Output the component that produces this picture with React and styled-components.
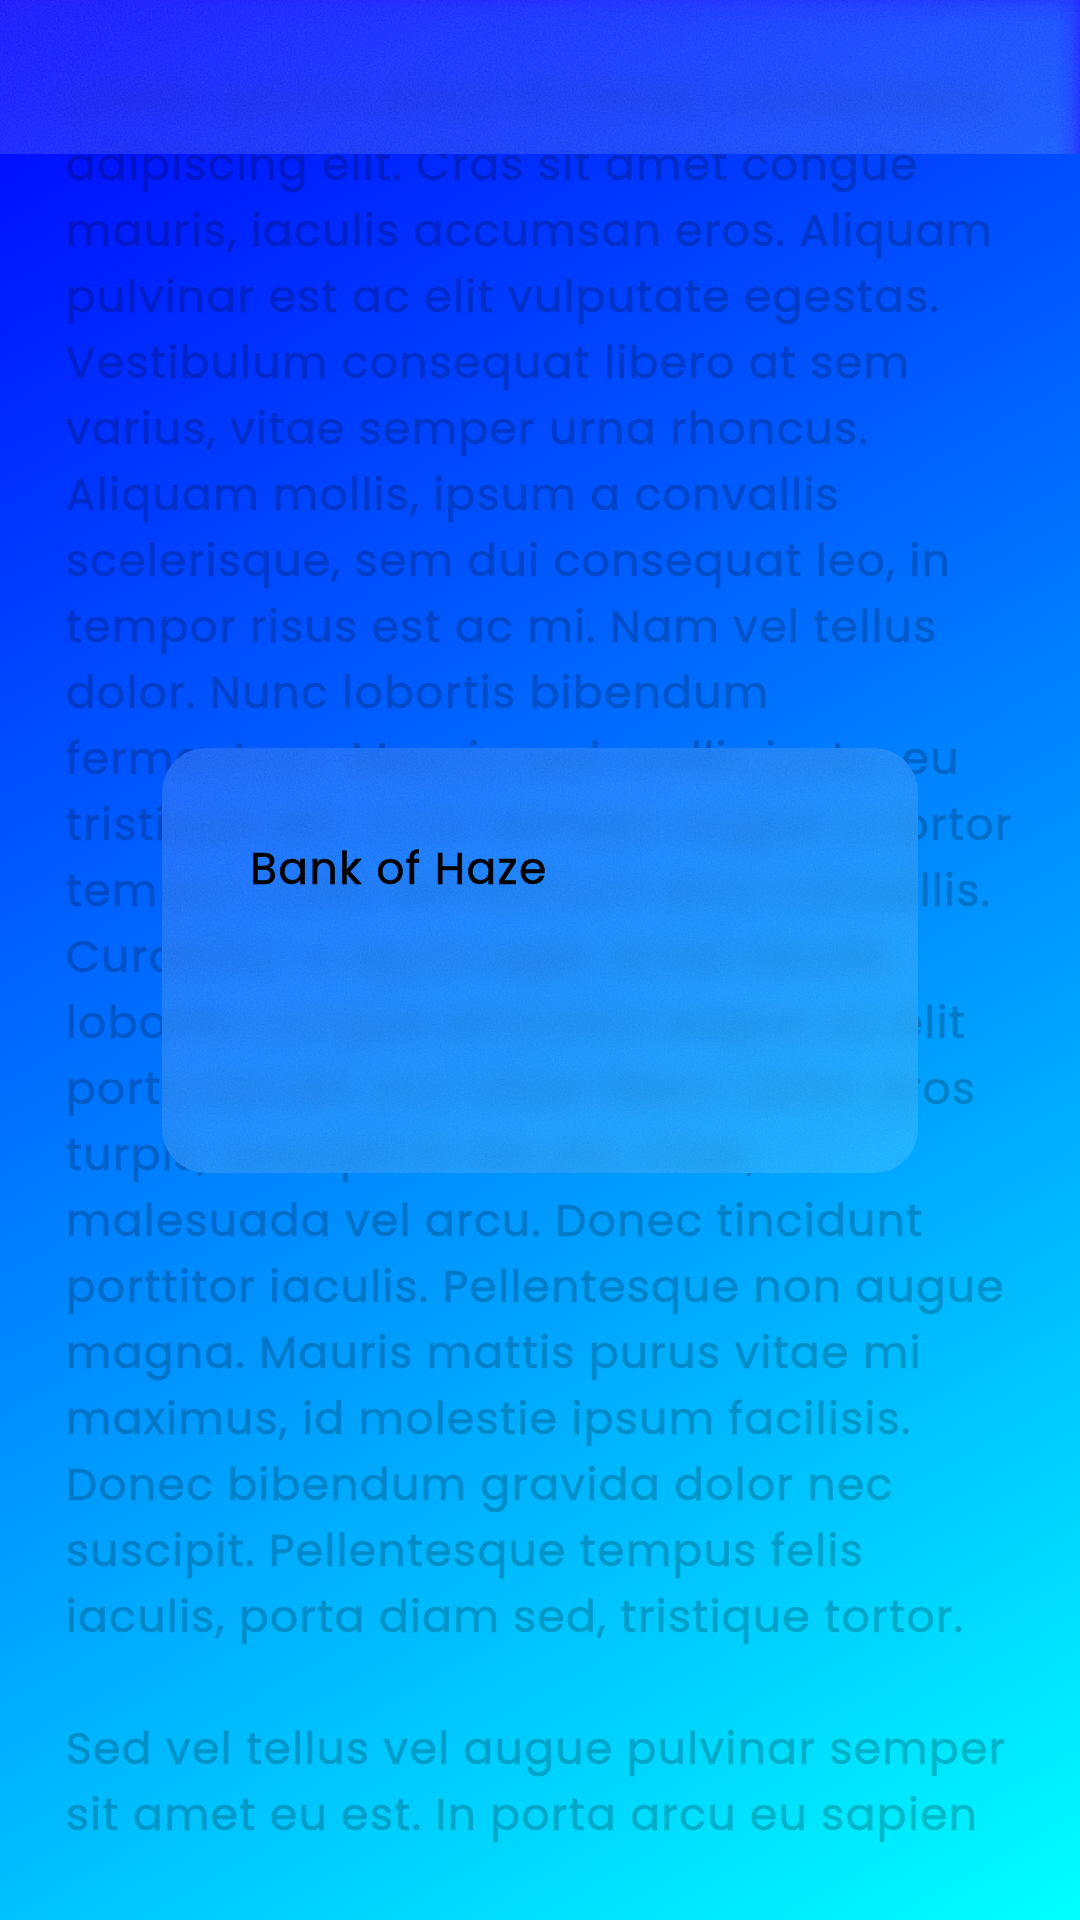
import React from "react";
import styled, { createGlobalStyle } from "styled-components";

const GlobalStyle = createGlobalStyle`
  * { box-sizing: border-box; }
  body { margin: 0; }
`;

const Screen = styled.main`
  display: grid;
  grid-template: 1920px / 1080px;
  width: 1080px;
  height: 1920px;
  overflow: hidden;
  background: linear-gradient(150.642deg, #0000ff, #00ffff);
  color: #000;
  font: 400 44px/66px Poppins, Inter, sans-serif;
  letter-spacing: 1.375px;
  -webkit-text-stroke: 0.6px #000;
`;

const Article = styled.article`
  grid-area: 1 / 1;
  padding: 66px;
  opacity: 0.21;
`;

const Paragraph = styled.p`
  margin: 0 0 66px;
  white-space: pre;
`;

const Overlay = styled.div`
  grid-area: 1 / 1;
  display: grid;
  place-items: center;
  z-index: 1;
`;

const Glass = styled.section`
  display: grid;
  grid-template: 100% / 100%;
`;

/* The box reaches past the panel so the blur also samples what lies just outside it;
   the mask keeps only the content box, whose corners are the outer radius less the padding. */
const Frost = styled.div`
  grid-area: 1 / 1;
  margin: ${(p) => p.$margin};
  padding: ${(p) => p.$padding};
  border-radius: ${(p) => p.$radius};
  background: rgba(255, 255, 255, 0.1);
  backdrop-filter: blur(14px);
  mask: linear-gradient(#000 0 0) content-box;
`;

const TopBar = styled(Glass)`
  grid-area: 1 / 1;
  place-self: start stretch;
  height: 154px;
`;

const EdgeShade = styled.div`
  grid-area: 1 / 1;
  z-index: 1;
  background:
    linear-gradient(270deg, rgba(32, 24, 255, 0.65), rgba(32, 32, 255, 0.3) 9px, rgba(32, 44, 255, 0) 24px),
    linear-gradient(180deg, rgba(32, 24, 255, 0.4), rgba(32, 32, 255, 0.2) 8px, rgba(32, 44, 255, 0) 24px);
`;

const Card = styled(Glass)`
  grid-area: 1 / 1;
  width: 756px;
  height: 425px;
`;

const Title = styled.h1`
  grid-area: 1 / 1;
  z-index: 2;
  margin: 0;
  padding: 88px;
  font: inherit;
`;

const NoiseLayer = styled.svg`
  grid-area: 1 / 1;
  z-index: 1;
  width: 100%;
  height: 100%;
  min-height: 0;
  border-radius: ${(p) => p.$radius};
  overflow: hidden;
`;

function Noise({ id, radius = "0" }) {
  return (
    <NoiseLayer $radius={radius} aria-hidden="true">
      <filter id={id} x="0" y="0" width="100%" height="100%" colorInterpolationFilters="sRGB">
        <feTurbulence type="fractalNoise" baseFrequency="0.55" numOctaves="2" seed="4" />
        <feColorMatrix values="0 0 0 0 1  0 0 0 0 1  0 0 0 0 1  0.12 0 0 0 -0.025" />
      </filter>
      <rect width="100%" height="100%" filter={`url(#${id})`} />
    </NoiseLayer>
  );
}

const paragraphs = [
  [
    "Lorem ipsum dolor sit amet, consectetur",
    "adipiscing elit. Cras sit amet congue",
    "mauris, iaculis accumsan eros. Aliquam",
    "pulvinar est ac elit vulputate egestas.",
    "Vestibulum consequat libero at sem",
    "varius, vitae semper urna rhoncus.",
    "Aliquam mollis, ipsum a convallis",
    "scelerisque, sem dui consequat leo, in",
    "tempor risus est ac mi. Nam vel tellus",
    "dolor. Nunc lobortis bibendum",
    "fermentum. Mauris sed mollis justo, eu",
    "tristique elit. Cras semper augue a tortor",
    "tempor, nulla fermentum eros convallis.",
    "Curabitur a ligula eget amet iaculis",
    "lobortis congue pharetra augue ac elit",
    "porta iaculis orci vitae libero dolor eros",
    "turpis, suscipit in iaculis vitae,",
    "malesuada vel arcu. Donec tincidunt",
    "porttitor iaculis. Pellentesque non augue",
    "magna. Mauris mattis purus vitae mi",
    "maximus, id molestie ipsum facilisis.",
    "Donec bibendum gravida dolor nec",
    "suscipit. Pellentesque tempus felis",
    "iaculis, porta diam sed, tristique tortor.",
  ],
  ["Sed vel tellus vel augue pulvinar semper", "sit amet eu est. In porta arcu eu sapien"],
];

export default function App() {
  return (
    <>
      <GlobalStyle />
      <Screen>
        <Article>
          {paragraphs.map((lines) => (
            <Paragraph key={lines[0]}>{lines.join("\n")}</Paragraph>
          ))}
        </Article>
        <Overlay>
          <TopBar as="header">
            <Frost $margin="0 0 -60px" $padding="0 0 60px" $radius="0" />
            <EdgeShade />
            <Noise id="bar-noise" />
          </TopBar>
          <Card>
            <Frost $margin="-60px" $padding="60px" $radius="104px" />
            <Noise id="card-noise" radius="44px" />
            <Title>Bank of Haze</Title>
          </Card>
        </Overlay>
      </Screen>
    </>
  );
}
